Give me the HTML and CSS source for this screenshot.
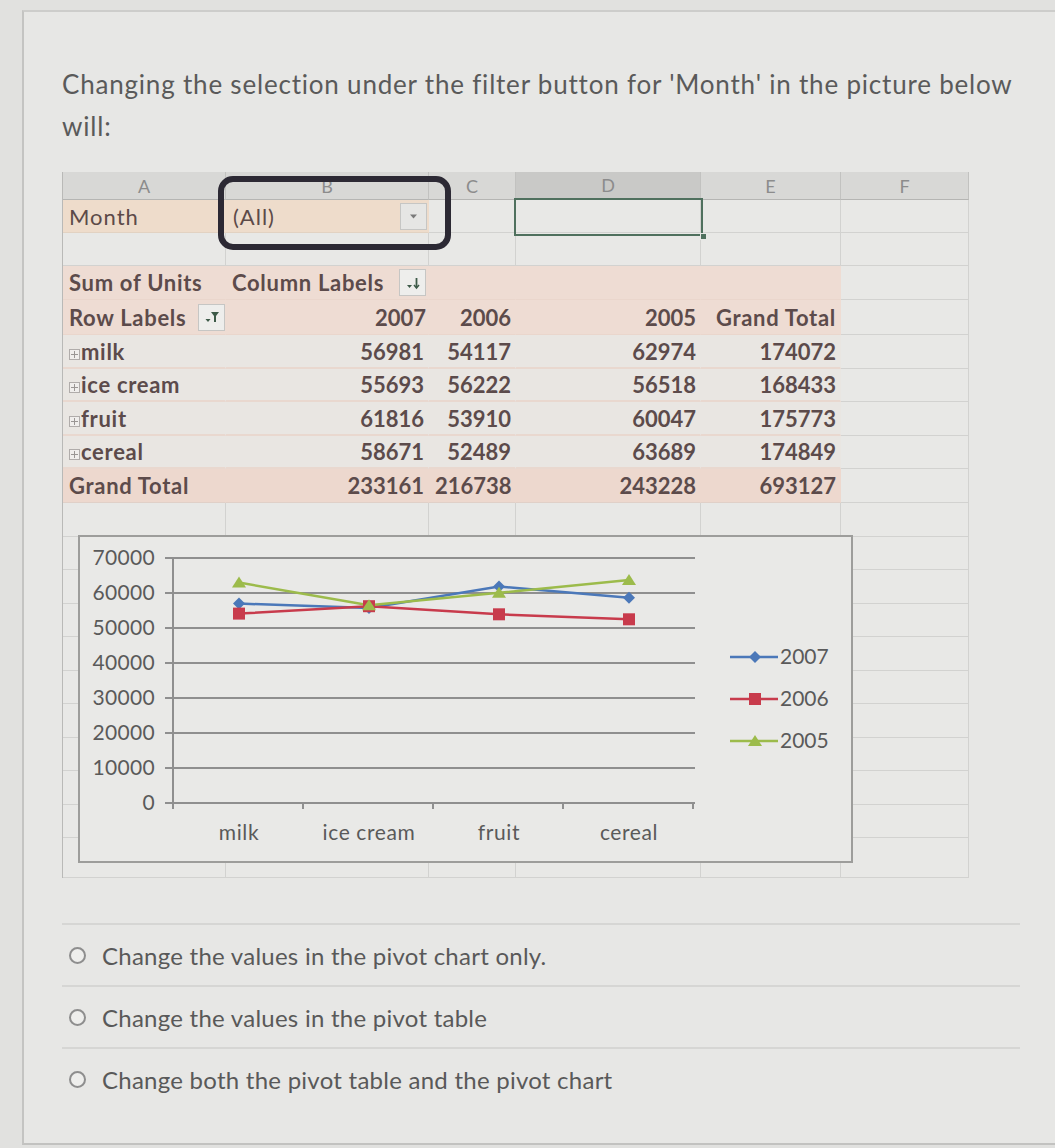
FILE: index.html
```html
<!DOCTYPE html>
<html>
<head>
<meta charset="utf-8">
<title>Pivot question</title>
<link rel="stylesheet" href="styles.css">
</head>
<body>
<div class="card">
  <p class="question">Changing the selection under the filter button for 'Month' in the picture below will:</p>

  <div class="sheet-wrap">
    <table class="sheet">
      <colgroup>
        <col class="ca"><col class="cb"><col class="cc"><col class="cd"><col class="ce"><col class="cf">
      </colgroup>
      <tr class="hdr"><th>A</th><th>B</th><th>C</th><th class="sel">D</th><th>E</th><th>F</th></tr>
      <tr class="h33">
        <td class="month">Month</td>
        <td class="month"><div class="cellflex"><span class="all">(All)</span><span class="btn"><svg width="11" height="7" viewBox="0 0 11 7"><path d="M2 1.5h7L5.5 5.5z" fill="#7a7a7a"/></svg></span></div></td>
        <td></td><td></td><td></td><td></td>
      </tr>
      <tr class="h33"><td></td><td></td><td></td><td></td><td></td><td></td></tr>
      <tr class="h34 pvh">
        <td class="pv lbl">Sum of Units</td>
        <td class="pv lbl"><div class="cellflex"><span>Column Labels</span><span class="btn fbtn"><svg width="18" height="18" viewBox="0 0 18 18"><path d="M3 11h5l-2.5 3z" fill="#3d5a48"/><path d="M12.5 4v9" stroke="#3d5a48" stroke-width="1.8"/><path d="M10 11l2.5 3 2.5-3" fill="none" stroke="#3d5a48" stroke-width="1.5"/></svg></span></div></td>
        <td class="pv"></td><td class="pv"></td><td class="pv"></td><td></td>
      </tr>
      <tr class="h35 pvh">
        <td class="pv lbl"><div class="cellflex"><span>Row Labels</span><span class="btn fbtn"><svg width="18" height="18" viewBox="0 0 18 18"><path d="M2.5 11h5L5 14z" fill="#3d5a48"/><path d="M8 4h8l-3 4v6h-2V8z" fill="#3d5a48"/></svg></span></div></td>
        <td class="pv num">2007</td><td class="pv num">2006</td><td class="pv num">2005</td><td class="pv num lbl">Grand Total</td><td></td>
      </tr>
      <tr class="h34 pvd">
        <td class="pv lbl"><span class="exp"></span>milk</td>
        <td class="pv num">56981</td><td class="pv num">54117</td><td class="pv num">62974</td><td class="pv num">174072</td><td></td>
      </tr>
      <tr class="h33 pvd">
        <td class="pv lbl"><span class="exp"></span>ice cream</td>
        <td class="pv num">55693</td><td class="pv num">56222</td><td class="pv num">56518</td><td class="pv num">168433</td><td></td>
      </tr>
      <tr class="h34 pvd">
        <td class="pv lbl"><span class="exp"></span>fruit</td>
        <td class="pv num">61816</td><td class="pv num">53910</td><td class="pv num">60047</td><td class="pv num">175773</td><td></td>
      </tr>
      <tr class="h33 pvd">
        <td class="pv lbl"><span class="exp"></span>cereal</td>
        <td class="pv num">58671</td><td class="pv num">52489</td><td class="pv num">63689</td><td class="pv num">174849</td><td></td>
      </tr>
      <tr class="h34 pvt">
        <td class="pv lbl">Grand Total</td>
        <td class="pv num">233161</td><td class="pv num">216738</td><td class="pv num">243228</td><td class="pv num">693127</td><td></td>
      </tr>
      <tr class="h34"><td></td><td></td><td></td><td></td><td></td><td></td></tr>
      <tr class="h33"><td></td><td></td><td></td><td></td><td></td><td></td></tr>
      <tr class="h34"><td></td><td></td><td></td><td></td><td></td><td></td></tr>
      <tr class="h33"><td></td><td></td><td></td><td></td><td></td><td></td></tr>
      <tr class="h34"><td></td><td></td><td></td><td></td><td></td><td></td></tr>
      <tr class="h33"><td></td><td></td><td></td><td></td><td></td><td></td></tr>
      <tr class="h34"><td></td><td></td><td></td><td></td><td></td><td></td></tr>
      <tr class="h33"><td></td><td></td><td></td><td></td><td></td><td></td></tr>
      <tr class="h34"><td></td><td></td><td></td><td></td><td></td><td></td></tr>
      <tr class="h33"><td></td><td></td><td></td><td></td><td></td><td></td></tr>
      <tr class="h40"><td></td><td></td><td></td><td></td><td></td><td></td></tr>
    </table>

    <div class="selection"><span class="handle"></span></div>

    <svg class="chart" width="775" height="328" viewBox="0 0 775 328">
      <rect x="1" y="1" width="773" height="326" fill="#e9e9e7" stroke="#9d9d9b" stroke-width="2"/>
      <g stroke="#8f8f8f" stroke-width="2">
        <line x1="87" y1="23" x2="617" y2="23"/>
        <line x1="87" y1="58" x2="617" y2="58"/>
        <line x1="87" y1="93" x2="617" y2="93"/>
        <line x1="87" y1="128" x2="617" y2="128"/>
        <line x1="87" y1="163" x2="617" y2="163"/>
        <line x1="87" y1="198" x2="617" y2="198"/>
        <line x1="87" y1="233" x2="617" y2="233"/>
        <line x1="87" y1="268" x2="617" y2="268"/>
        <line x1="95" y1="23" x2="95" y2="274"/>
        <line x1="225" y1="268" x2="225" y2="274"/>
        <line x1="355" y1="268" x2="355" y2="274"/>
        <line x1="485" y1="268" x2="485" y2="274"/>
        <line x1="615" y1="268" x2="615" y2="274"/>
      </g>
      <g class="ylab" text-anchor="end">
        <text x="77" y="30">70000</text>
        <text x="77" y="65">60000</text>
        <text x="77" y="100">50000</text>
        <text x="77" y="135">40000</text>
        <text x="77" y="170">30000</text>
        <text x="77" y="205">20000</text>
        <text x="77" y="240">10000</text>
        <text x="77" y="275">0</text>
      </g>
      <g class="xlab" text-anchor="middle">
        <text x="161" y="305">milk</text>
        <text x="291" y="305">ice cream</text>
        <text x="421" y="305">fruit</text>
        <text x="551" y="305">cereal</text>
      </g>
      <polyline points="161,68.6 291,73.1 421,51.6 551,62.7" fill="none" stroke="#4b78b9" stroke-width="2.5"/>
      <polyline points="161,78.6 291,71.2 421,79.3 551,84.3" fill="none" stroke="#c83b4c" stroke-width="2.5"/>
      <polyline points="161,47.6 291,70.2 421,57.8 551,45.1" fill="none" stroke="#9cbb4b" stroke-width="2.5"/>
      <g fill="#4b78b9">
        <path d="M161 62.6l6 6-6 6-6-6z"/>
        <path d="M291 67.1l6 6-6 6-6-6z"/>
        <path d="M421 45.6l6 6-6 6-6-6z"/>
        <path d="M551 56.7l6 6-6 6-6-6z"/>
      </g>
      <g fill="#c83b4c">
        <rect x="155" y="72.6" width="12" height="12"/>
        <rect x="285" y="65.2" width="12" height="12"/>
        <rect x="415" y="73.3" width="12" height="12"/>
        <rect x="545" y="78.3" width="12" height="12"/>
      </g>
      <g fill="#9cbb4b">
        <path d="M161 41.6l7 11h-14z"/>
        <path d="M291 64.2l7 11h-14z"/>
        <path d="M421 51.8l7 11h-14z"/>
        <path d="M551 39.1l7 11h-14z"/>
      </g>
      <g class="legend">
        <line x1="652" y1="122" x2="700" y2="122" stroke="#4b78b9" stroke-width="2.5"/>
        <path d="M677 116l6 6-6 6-6-6z" fill="#4b78b9"/>
        <text x="702" y="129">2007</text>
        <line x1="652" y1="164" x2="700" y2="164" stroke="#c83b4c" stroke-width="2.5"/>
        <rect x="671" y="158" width="12" height="12" fill="#c83b4c"/>
        <text x="702" y="171">2006</text>
        <line x1="652" y1="206" x2="700" y2="206" stroke="#9cbb4b" stroke-width="2.5"/>
        <path d="M677 200l7 11h-14z" fill="#9cbb4b"/>
        <text x="702" y="213">2005</text>
      </g>
    </svg>

    <div class="annotation"></div>
  </div>

  <ul class="options">
    <li><span class="radio"></span>Change the values in the pivot chart only.</li>
    <li><span class="radio"></span>Change the values in the pivot table</li>
    <li><span class="radio"></span>Change both the pivot table and the pivot chart</li>
  </ul>
</div>
</body>
</html>
```

FILE: styles.css
```css
* { box-sizing: border-box; }
html, body { margin: 0; padding: 0; }
body {
  width: 1055px;
  height: 1148px;
  overflow: hidden;
  background: #e1e1df;
  font-family: Lato, "Open Sans", sans-serif;
}
.card {
  margin: 10px 0 0 22px;
  height: 1135px;
  border-top: 2px solid #cdcdcb;
  border-left: 2px solid #c4c4c2;
  border-bottom: 2px solid #c2c2c0;
  background: #e7e7e5;
  padding: 51px 0 0 38px;
}
.question {
  margin: 0;
  width: 975px;
  font-size: 26px;
  letter-spacing: 0.8px;
  line-height: 42px;
  color: #5a5a5a;
}

/* spreadsheet */
.sheet-wrap {
  position: relative;
  width: 906px;
  margin-top: 25px;
}
.sheet {
  border-collapse: separate;
  border-spacing: 0;
  table-layout: fixed;
  width: 906px;
  border-left: 1px solid #b9b9b7;
  background: #e8e8e6;
}
.ca { width: 163px; }
.cb { width: 203px; }
.cc { width: 87px; }
.cd { width: 185px; }
.ce { width: 140px; }
.cf { width: 128px; }

.sheet th {
  height: 28px;
  padding: 0;
  background: #d8d8d6;
  color: #8c8c8c;
  font-weight: normal;
  font-size: 18px;
  border-right: 1px solid #c2c2c0;
  border-bottom: 1px solid #b5b5b3;
}
.sheet th.sel {
  background: #c9c9c7;
  border-bottom: 2px solid #6e8878;
}
.sheet td {
  padding: 0 4px 0 6px;
  border-right: 1px solid #d2d2d0;
  border-bottom: 1px solid #d2d2d0;
  font-size: 22px;
  font-weight: bold;
  color: #5c4b4b;
  white-space: nowrap;
  overflow: hidden;
  vertical-align: middle;
}
.sheet td.lbl { letter-spacing: 0.7px; }
.h33 { height: 33px; }
.h34 { height: 34px; }
.h35 { height: 35px; }
.h40 { height: 40px; }

.cellflex {
  display: flex;
  align-items: center;
  justify-content: space-between;
}
.sheet td.month {
  background: #eedccb;
  border-right-color: #eedccb;
  border-bottom-color: #e2d2c2;
  font-weight: normal;
  font-size: 22px;
  letter-spacing: 1px;
  color: #5c4a48;
  padding-right: 1px;
}
.all { padding-left: 1px; }
.btn {
  display: flex;
  align-items: center;
  justify-content: center;
  flex: none;
  width: 27px;
  height: 27px;
  background: #e6e6e4;
  border: 1px solid #c6c6c4;
}
.fbtn { background: #eeeeec; }

/* pivot */
.sheet td.pv { border-right-color: transparent; }
.pvh td.pv {
  background: #eedcd3;
  border-bottom-color: #ead6cc;
}
.sheet .pvh td.pv:first-child { padding-right: 0; }
.sheet .pvh td.pv:nth-child(2) { padding-right: 2px; }
.pvd td.pv {
  background: #e9e6e2;
  border-bottom: 2px solid #e9d8cf;
}
.pvt td.pv {
  background: #edd8ce;
  border-bottom-color: #e0d0c8;
}
.num { text-align: right; }
.exp {
  display: inline-block;
  width: 11px;
  height: 11px;
  margin-right: 1px;
  vertical-align: 0;
  border: 1px solid #b0acaa;
  background:
    linear-gradient(#9a9694, #9a9694) center / 7px 1px no-repeat,
    linear-gradient(#9a9694, #9a9694) center / 1px 7px no-repeat,
    #f0eeec;
}

/* overlays */
.selection {
  position: absolute;
  left: 452px;
  top: 26px;
  width: 189px;
  height: 38px;
  border: 2.5px solid #4f705e;
}
.handle {
  position: absolute;
  right: -6px;
  bottom: -6px;
  width: 7px;
  height: 7px;
  background: #4f705e;
  border: 1px solid #e8e8e6;
}
.chart {
  position: absolute;
  left: 16px;
  top: 363px;
}
.ylab text, .xlab text, .legend text {
  font-family: Lato, "Open Sans", sans-serif;
  font-size: 21px;
  fill: #5a5a5a;
}
.ylab text { letter-spacing: 0.3px; }
.xlab text { letter-spacing: 0.6px; }
.annotation {
  position: absolute;
  left: 156px;
  top: 4px;
  width: 233px;
  height: 74px;
  border: 6px solid #2c2934;
  border-radius: 15px;
}

/* answer options */
.options {
  list-style: none;
  margin: 45px 0 0 0;
  padding: 0;
  width: 958px;
}
.options li {
  display: flex;
  align-items: center;
  height: 62px;
  padding-left: 7px;
  border-top: 2px solid #d6d6d4;
  font-size: 24px;
  letter-spacing: 0.25px;
  color: #595959;
}
.radio {
  flex: none;
  width: 17px;
  height: 17px;
  margin-right: 16px;
  border: 2px solid #8e8e8e;
  border-radius: 50%;
  background: #eeeeec;
}
```
